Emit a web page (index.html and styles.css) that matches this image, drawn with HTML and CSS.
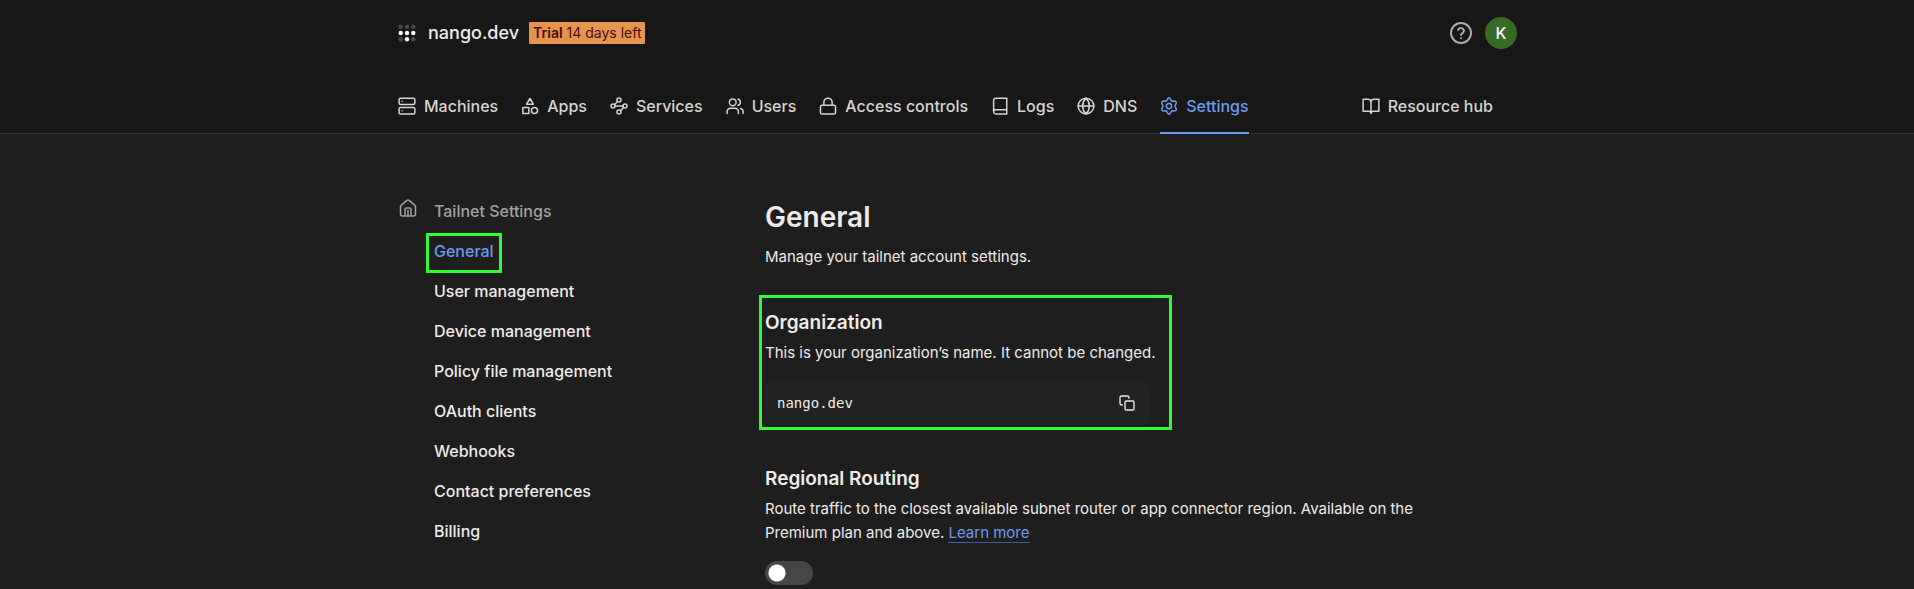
FILE: index.html
```html
<!DOCTYPE html>
<html lang="en">
<head>
<meta charset="utf-8">
<meta name="viewport" content="width=device-width, initial-scale=1">
<title>General - Settings</title>
<link rel="stylesheet" href="styles.css">
</head>
<body>
<header class="header">
  <div class="container topbar">
    <svg class="logo" viewBox="0 0 18 18" aria-hidden="true">
      <g fill="#4a4948"><circle cx="2.7" cy="2.7" r="2.2"/><circle cx="9" cy="2.7" r="2.2"/><circle cx="15.3" cy="2.7" r="2.2"/><circle cx="2.7" cy="15.3" r="2.2"/><circle cx="15.3" cy="15.3" r="2.2"/></g>
      <g fill="#fff"><circle cx="2.7" cy="9" r="2.2"/><circle cx="9" cy="9" r="2.2"/><circle cx="15.3" cy="9" r="2.2"/><circle cx="9" cy="15.3" r="2.2"/></g>
    </svg>
    <span class="org">nango.dev</span>
    <a class="trial" href="#trial"><strong>Trial</strong> 14 days left</a>
    <div class="account">
      <button class="help" type="button" aria-label="Help">
        <svg class="icon icon-help" viewBox="0 0 24 24"><circle cx="12" cy="12" r="10"/><path d="M9.1 9a3 3 0 0 1 5.8 1c0 2-2.9 2.6-2.9 4M12 17.2h.01"/></svg>
      </button>
      <button class="avatar" type="button" aria-label="Account">K</button>
    </div>
  </div>
  <nav class="container tabs" aria-label="Main">
    <a class="tab" href="#machines"><svg class="icon" viewBox="0 0 24 24"><rect x="1.5" y="1.5" width="21" height="8.5" rx="2"/><rect x="1.5" y="14" width="21" height="8.5" rx="2"/><path d="M5.5 5.8h.01M5.5 18.2h.01"/></svg>Machines</a>
    <a class="tab" href="#apps"><svg class="icon" viewBox="0 0 24 24"><path d="M12 2l4.5 7.5h-9z"/><rect x="2.5" y="14" width="8" height="8"/><circle cx="18" cy="18" r="4"/></svg>Apps</a>
    <a class="tab" href="#services"><svg class="icon" viewBox="0 0 24 24"><circle cx="12" cy="4" r="2.7"/><circle cx="4" cy="12" r="2.7"/><circle cx="20" cy="12" r="2.7"/><circle cx="12" cy="20" r="2.7"/><path d="M6 10.200L10 6M6.700 12h10.600M14 18.200L18 14"/></svg>Services</a>
    <a class="tab" href="#users"><svg class="icon" viewBox="0 0 24 24"><circle cx="9" cy="7" r="4.500"/><path d="M1.500 22v-2.500a4.500 4.500 0 0 1 4.500-4.500h6a4.500 4.500 0 0 1 4.500 4.500V22M16 2.700a4.500 4.500 0 0 1 0 8.600M22.800 22v-2.500a4.500 4.500 0 0 0-3.400-4.300"/></svg>Users</a>
    <a class="tab" href="#access"><svg class="icon" viewBox="0 0 24 24"><rect x="2" y="11" width="20" height="11.500" rx="2"/><path d="M6.500 11V7a5.500 5.500 0 0 1 11 0v4"/></svg>Access controls</a>
    <a class="tab" href="#logs"><svg class="icon" viewBox="0 0 24 24"><path d="M3.500 19.800A2.700 2.700 0 0 1 6.200 17H21M6.200 1.500H21v21H6.200a2.700 2.700 0 0 1-2.700-2.700V4.200a2.700 2.700 0 0 1 2.700-2.700z"/></svg>Logs</a>
    <a class="tab" href="#dns"><svg class="icon" viewBox="0 0 24 24"><circle cx="12" cy="12" r="10.500"/><path d="M1.500 12h21M12 1.500c6 6 6 15 0 21M12 1.500c-6 6-6 15 0 21"/></svg>DNS</a>
    <a class="tab tab-active" href="#settings" aria-current="page"><svg class="icon" viewBox="0 0 24 24"><circle cx="12" cy="12" r="3.500"/><path d="M9.500 3.800Q12 -1.500 14.500 3.800L15.800 5.600L18 5.300Q23.700 5.300 20.800 10L19.800 12L20.800 14Q23.700 18.700 18 18.700L15.800 18.400L14.500 20.200Q12 25.500 9.500 20.200L8.200 18.400L6 18.700Q.3 18.700 3.200 14L4.200 12L3.200 10Q.3 5.300 6 5.300L8.200 5.600Z"/></svg>Settings</a>
    <a class="tab tab-end" href="#resources"><svg class="icon" viewBox="0 0 24 24"><path d="M1.500 3h6.500a4 4 0 0 1 4 4v15a3 3 0 0 0-3-3H1.500zM22.500 3h-6.500a4 4 0 0 0-4 4v15a3 3 0 0 1 3-3h7.500z"/></svg>Resource hub</a>
  </nav>
</header>
<div class="container page">
  <nav class="sidebar" aria-labelledby="side-title">
    <svg class="icon icon-home" viewBox="0 0 24 24"><path d="M2 10.500a3 3 0 0 1 1.100-2.300l7-6a3 3 0 0 1 3.800 0l7 6A3 3 0 0 1 22 10.500V20a2.500 2.500 0 0 1-2.500 2.500h-15A2.500 2.500 0 0 1 2 20zM8 22.500V14a2 2 0 0 1 2-2h4a2 2 0 0 1 2 2v8.500M12 15v7"/></svg>
    <div class="side-items">
      <span class="side-title" id="side-title">Tailnet Settings</span>
      <a class="side-link side-active" href="#general" aria-current="page">General</a>
      <a class="side-link" href="#user-management">User management</a>
      <a class="side-link" href="#device-management">Device management</a>
      <a class="side-link" href="#policy">Policy file management</a>
      <a class="side-link" href="#oauth">OAuth clients</a>
      <a class="side-link" href="#webhooks">Webhooks</a>
      <a class="side-link" href="#contact">Contact preferences</a>
      <a class="side-link" href="#billing">Billing</a>
    </div>
  </nav>
  <main class="main">
    <h1 class="title">General</h1>
    <p class="text">Manage your tailnet account settings.</p>
    <section class="section organization">
      <h2 class="subtitle" id="org-title">Organization</h2>
      <p class="text">This is your organization’s name. It cannot be changed.</p>
      <div class="field">
        <input class="field-input" type="text" value="nango.dev" readonly aria-labelledby="org-title">
        <button class="copy" type="button" aria-label="Copy"><svg class="icon icon-copy" viewBox="0 0 24 24"><rect x="9" y="9" width="13.500" height="13.500" rx="2"/><path d="M5 15H4a2.500 2.500 0 0 1-2.500-2.500V4A2.500 2.500 0 0 1 4 1.500h8.500A2.500 2.500 0 0 1 15 4v1"/></svg></button>
      </div>
    </section>
    <section class="section">
      <h2 class="subtitle" id="routing-title">Regional Routing</h2>
      <p class="text">Route traffic to the closest available subnet router or app connector region. Available on the Premium plan and above. <a class="link" href="#learn">Learn more</a></p>
      <input class="toggle" type="checkbox" role="switch" aria-labelledby="routing-title">
    </section>
  </main>
</div>
</body>
</html>
```

FILE: styles.css
```css
* {
  box-sizing: border-box;
}

body {
  margin: 0;
  background: #1f1e1e;
  color: #eeebea;
  font: 16px/24px Inter, "Liberation Sans", sans-serif;
  overflow-x: hidden;
}

a {
  color: inherit;
  text-decoration: none;
}

button {
  border: 0;
  padding: 0;
  background: none;
  color: inherit;
  font: inherit;
}

h1,
h2,
p {
  margin: 0;
}

.container {
  max-width: 1120px;
  margin: 0 auto;
}

.icon {
  flex: none;
  width: 18px;
  height: 18px;
  fill: none;
  stroke: currentColor;
  stroke-width: 2;
  stroke-linecap: round;
  stroke-linejoin: round;
}

.header {
  background: #181717;
  border-bottom: 1px solid #302f2e;
}

.topbar {
  display: flex;
  align-items: center;
  height: 66px;
}

.logo {
  width: 18px;
  height: 18px;
  margin: 0 12px 0 1px;
}

.org {
  font-size: 18px;
  font-weight: 500;
}

.trial {
  margin-left: 10px;
  padding: 0 4px;
  border-radius: 1px;
  background: #e5954d;
  color: #4d0d10;
  font-size: 14px;
  line-height: 22px;
}

.trial strong {
  font-weight: 600;
}

.account {
  display: flex;
  align-items: center;
  gap: 12px;
  margin-left: auto;
}

.help {
  display: flex;
  color: #afacab;
}

.icon-help {
  width: 24px;
  height: 24px;
}

.avatar {
  width: 32px;
  height: 32px;
  border-radius: 50%;
  background: #366b25;
  color: #fff;
  font-weight: 500;
}

.tabs {
  display: flex;
  gap: 23px;
  height: 67px;
  padding: 0 24px 0 1px;
}

.tab {
  display: flex;
  align-items: center;
  gap: 8px;
  padding-top: 14px;
  margin-bottom: -1px;
  border-bottom: 2px solid transparent;
  color: #d6d3d1;
  font-weight: 500;
  white-space: nowrap;
}

.tab-active {
  color: #6e9aee;
  border-color: #6e9aee;
}

.tab-end {
  margin-left: auto;
}

.page {
  display: flex;
  padding-top: 57px;
}

.sidebar {
  display: flex;
  flex: 0 0 368px;
  gap: 17px;
  padding-left: 2px;
}

.icon-home {
  margin-top: 8px;
  color: #a3a09f;
}

.side-items {
  display: flex;
  flex-direction: column;
  align-items: flex-start;
  gap: 16px;
  padding-top: 8px;
  font-weight: 500;
}

.side-title {
  color: #a3a09f;
}

.side-link {
  position: relative;
}

.side-active {
  color: #6e9aee;
}

.side-active::after,
.organization::after {
  content: "";
  position: absolute;
  border: 3px solid #2ffb37;
  pointer-events: none;
}

.side-active::after {
  inset: -6px -8px -10px;
}

.main {
  flex: 0 1 690px;
  padding-top: 7px;
}

.title {
  margin-bottom: 9px;
  font-size: 28px;
  line-height: 38px;
  font-weight: 600;
}

.text {
  font-size: 15px;
}

.section {
  margin-top: 40px;
}

.organization {
  position: relative;
  width: fit-content;
}

.organization::after {
  inset: -14px -16px -5px -6px;
}

.subtitle {
  margin-bottom: 4px;
  font-size: 19px;
  line-height: 28px;
  font-weight: 600;
}

.field {
  display: flex;
  align-items: center;
  max-width: 384px;
  height: 44px;
  margin-top: 16px;
  padding: 0 14px 0 12px;
  border-radius: 6px;
  background: #232222;
}

.field-input {
  flex: 1;
  min-width: 0;
  border: 0;
  padding: 0;
  outline: 0;
  background: none;
  color: inherit;
  font: 14px/20px "DejaVu Sans Mono", monospace;
}

.copy {
  display: flex;
}

.icon-copy {
  width: 16px;
  height: 16px;
}

.link {
  color: #6e9aee;
  border-bottom: 1px solid #3f5f9c;
}

.toggle {
  display: block;
  appearance: none;
  width: 48px;
  height: 24px;
  margin: 16px 0 0;
  border-radius: 12px;
  background: radial-gradient(circle at 12px 12px, #fff 8px, #474645 9px);
}
```
